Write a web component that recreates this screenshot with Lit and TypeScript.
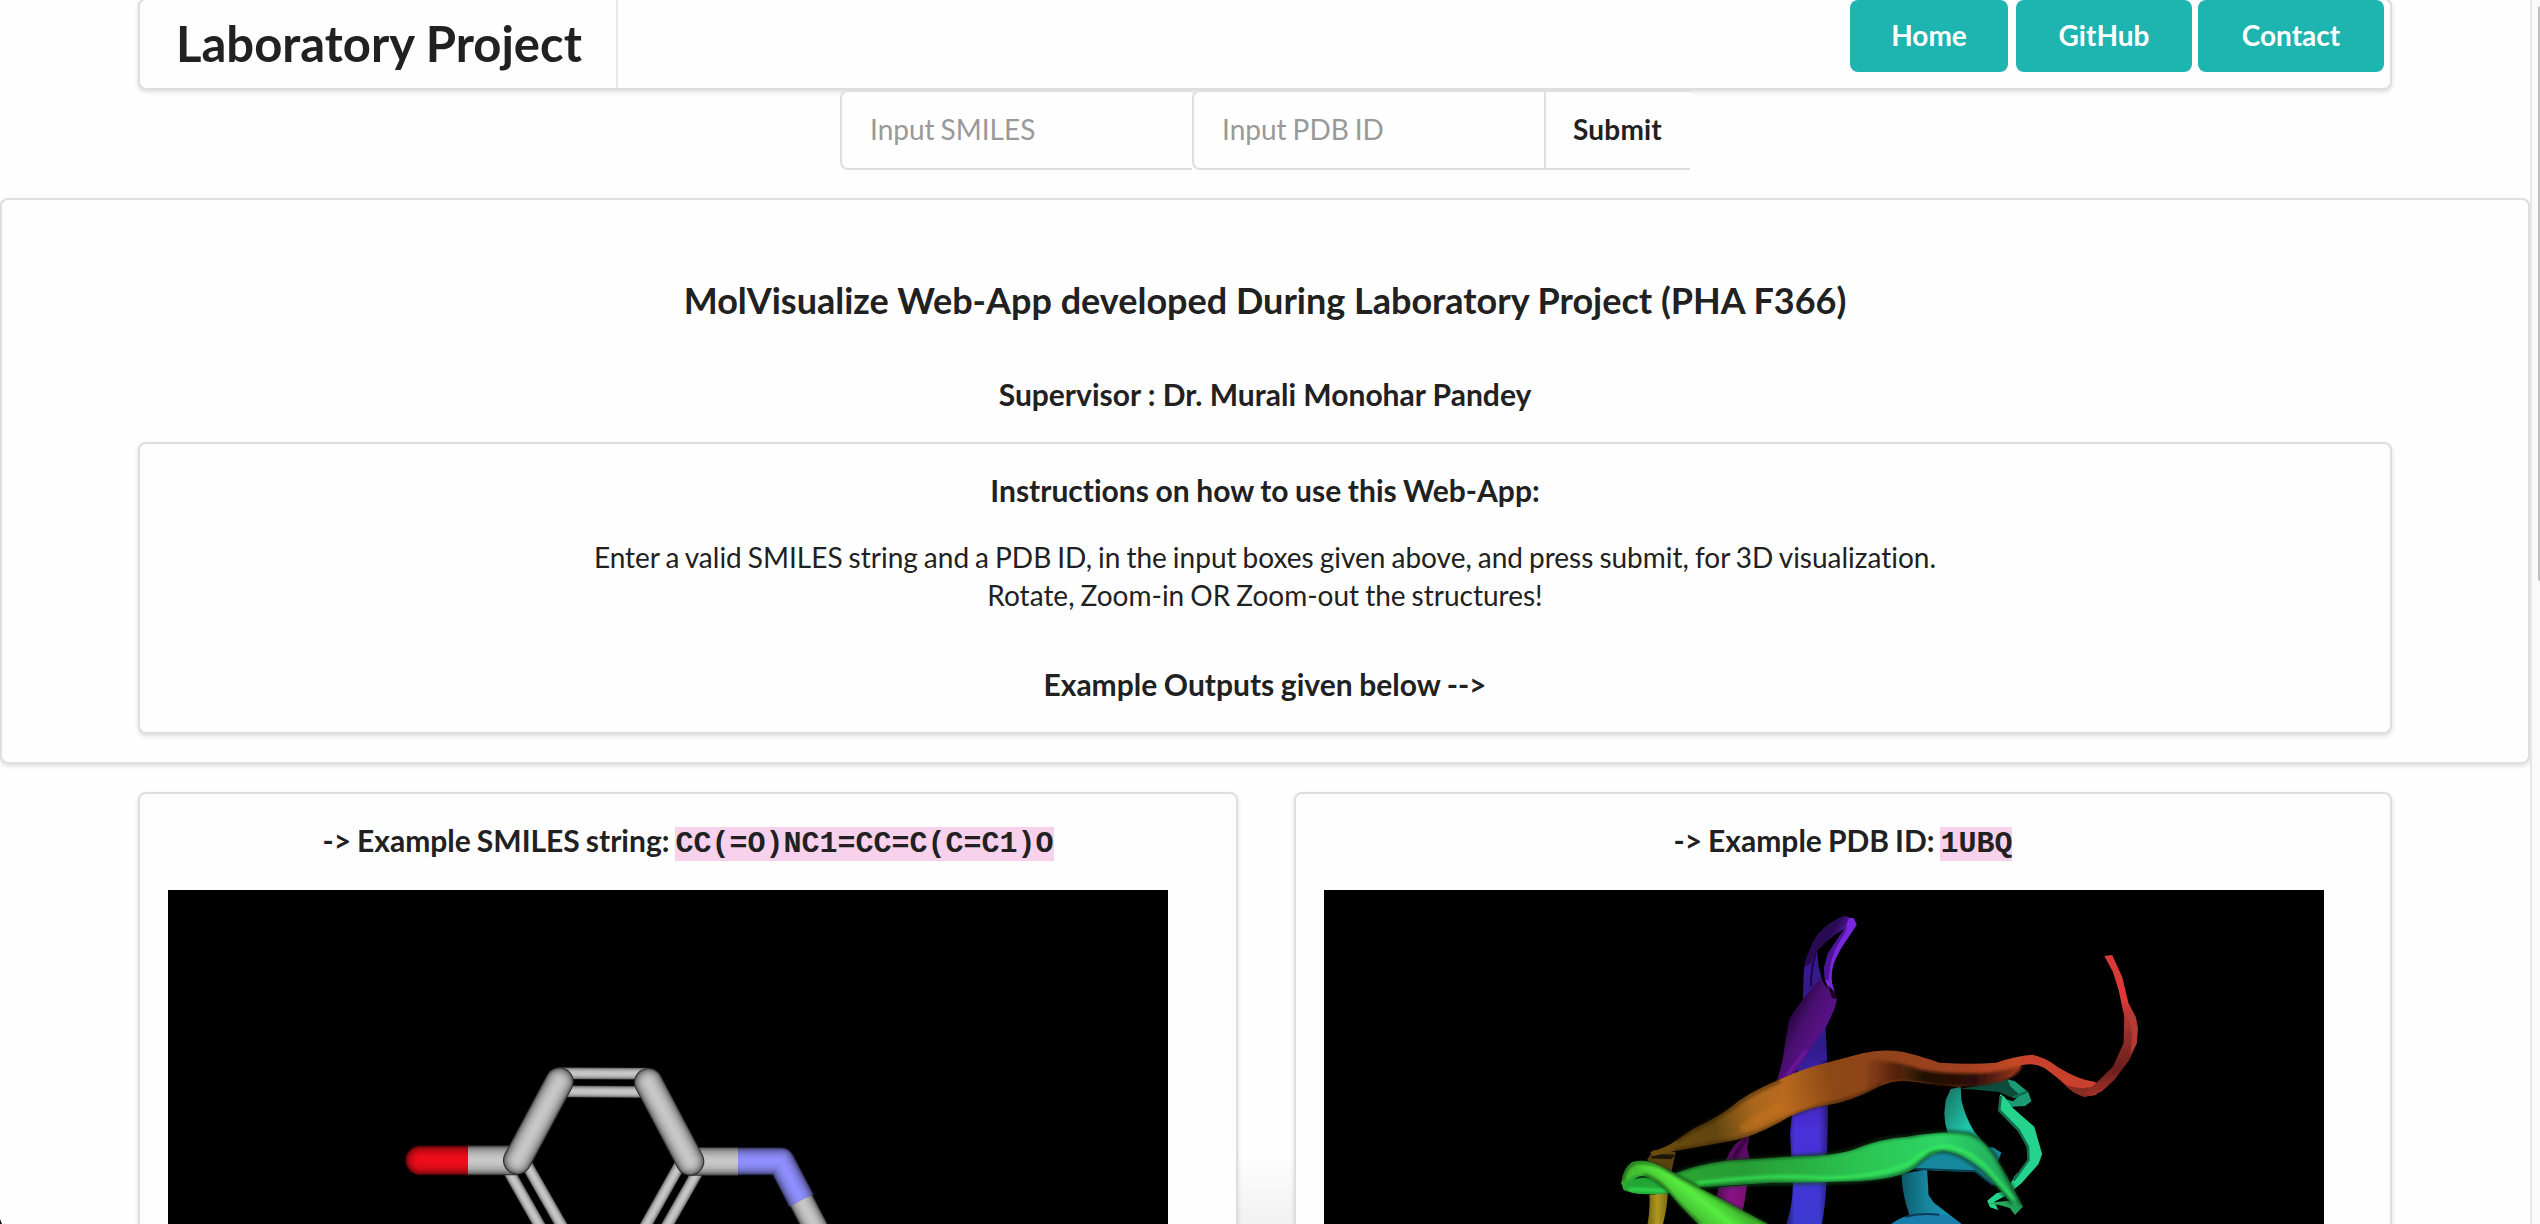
import { LitElement, html, svg, css } from "lit";
import { customElement } from "lit/decorators.js";

type RGB = [number, number, number];

/** A shaded cylinder: concentric strokes, dark at the rim and bright on the axis. */
const tube = (d: string, width: number, color: RGB, cap: "round" | "butt" = "round") => {
  const steps = 14;
  return Array.from({ length: steps }, (_, i) => {
    const t = 1 - i / steps;
    const k = 0.22 + 0.78 * Math.sqrt(1 - t * t);
    const fill = `rgb(${color.map((c) => Math.round(c * k)).join(",")})`;
    return svg`<path d=${d} fill="none" stroke=${fill} stroke-width=${width * t}
      stroke-linecap=${cap} stroke-linejoin="round"></path>`;
  });
};

const GREY: RGB = [200, 200, 200];
const RED: RGB = [240, 13, 26];
const BLUE: RGB = [143, 143, 255];

@customElement("molecule-view")
export class MoleculeView extends LitElement {
  static styles = css`
    :host { display: block; background: #000; }
    svg { display: block; }
  `;
  render() {
    return html`<svg width="1000" height="334" viewBox="168 890 1000 334">
      <g transform="translate(380 1040) scale(0.33333)">
        ${tube("M540 100L805 101", 36, GREY)}
        ${tube("M540 154L805 156", 36, GREY)}
        ${tube("M383 388L492 580", 36, GREY)}
        ${tube("M438 370L558 580", 36, GREY)}
        ${tube("M902 370L784 580", 36, GREY)}
        ${tube("M953 395L848 580", 36, GREY)}
        ${tube("M120 361L262 361", 90, RED)}
        ${tube("M264 361L412 361", 90, GREY, "butt")}
        ${tube("M930 364L1076 364", 86, GREY, "butt")}
        ${tube("M412 361L538 125", 86, GREY)}
        ${tube("M805 127L930 364", 86, GREY)}
        ${tube("M1075 364L1203 364L1265 483", 84, BLUE, "butt")}
        ${tube("M1264 482L1330 609", 76, GREY, "butt")}
      </g>
    </svg>`;
  }
}

@customElement("protein-view")
export class ProteinView extends LitElement {
  static styles = css`
    :host { display: block; background: #000; }
    svg { display: block; }
  `;
  render() {
    return html`<svg width="1000" height="334" viewBox="1324 890 1000 334">
      <defs>
        <linearGradient id="strand" x1="0" y1="0" x2="0" y2="1">
          <stop offset="0" stop-color="#3a1890"></stop><stop offset=".35" stop-color="#301a88"></stop>
          <stop offset=".65" stop-color="#4a30d8"></stop><stop offset="1" stop-color="#3a3ad0"></stop>
        </linearGradient>
        <linearGradient id="edge" x1="0" y1="0" x2="1" y2="0">
          <stop offset="0" stop-color="#000" stop-opacity=".6"></stop><stop offset=".25" stop-color="#000" stop-opacity="0"></stop>
          <stop offset=".8" stop-color="#000" stop-opacity="0"></stop><stop offset="1" stop-color="#000" stop-opacity=".4"></stop>
        </linearGradient>
        <linearGradient id="violet" gradientUnits="userSpaceOnUse" x1="520" y1="370" x2="625" y2="420">
          <stop offset="0" stop-color="#260540"></stop><stop offset=".4" stop-color="#4a1070"></stop><stop offset="1" stop-color="#5c118c"></stop>
        </linearGradient>
        <linearGradient id="loop" gradientUnits="userSpaceOnUse" x1="600" y1="70" x2="680" y2="110">
          <stop offset="0" stop-color="#2b0c5c"></stop><stop offset=".6" stop-color="#260a4c"></stop><stop offset="1" stop-color="#4c189c"></stop>
        </linearGradient>
        <linearGradient id="orange" gradientUnits="userSpaceOnUse" x1="140" y1="700" x2="1180" y2="500">
          <stop offset="0" stop-color="#6b4c0e"></stop><stop offset=".17" stop-color="#61460f"></stop>
          <stop offset=".28" stop-color="#a9671c"></stop><stop offset=".37" stop-color="#b96a1e"></stop>
          <stop offset=".5" stop-color="#8c4816"></stop><stop offset=".66" stop-color="#91431a"></stop>
          <stop offset=".85" stop-color="#a34120"></stop><stop offset="1" stop-color="#c64a27"></stop>
        </linearGradient>
        <linearGradient id="under" gradientUnits="userSpaceOnUse" x1="740" y1="500" x2="1185" y2="510">
          <stop offset="0" stop-color="#1e0d04" stop-opacity="0"></stop><stop offset=".38" stop-color="#190a04" stop-opacity=".95"></stop>
          <stop offset=".7" stop-color="#2c0f07"></stop><stop offset="1" stop-color="#a43a1f"></stop>
        </linearGradient>
        <linearGradient id="green" gradientUnits="userSpaceOnUse" x1="60" y1="0" x2="1180" y2="0">
          <stop offset="0" stop-color="#2fb033"></stop><stop offset=".3" stop-color="#279c35"></stop>
          <stop offset=".6" stop-color="#2bc452"></stop><stop offset=".8" stop-color="#2ed666"></stop>
          <stop offset="1" stop-color="#1f9d59"></stop>
        </linearGradient>
        <linearGradient id="lime" gradientUnits="userSpaceOnUse" x1="300" y1="860" x2="240" y2="930">
          <stop offset="0" stop-color="#40b62e"></stop><stop offset=".45" stop-color="#56ec40"></stop><stop offset="1" stop-color="#44be32"></stop>
        </linearGradient>
        <linearGradient id="red" gradientUnits="userSpaceOnUse" x1="1400" y1="170" x2="1400" y2="590">
          <stop offset="0" stop-color="#d93a38"></stop><stop offset=".3" stop-color="#dc3937"></stop>
          <stop offset=".55" stop-color="#94302b"></stop><stop offset=".8" stop-color="#6b1e1c"></stop><stop offset="1" stop-color="#a5312a"></stop>
        </linearGradient>
        <linearGradient id="cyan" x1="0" y1="0" x2="1" y2="0">
          <stop offset="0" stop-color="#0b5a6b"></stop><stop offset=".4" stop-color="#17839c"></stop><stop offset="1" stop-color="#1aa3c0"></stop>
        </linearGradient>
        <linearGradient id="teal" x1="0" y1="0" x2="1" y2="1">
          <stop offset="0" stop-color="#15705f"></stop><stop offset=".55" stop-color="#22c5ac"></stop><stop offset="1" stop-color="#158f8f"></stop>
        </linearGradient>
        <linearGradient id="gold" x1="0" y1="0" x2="1" y2="0">
          <stop offset="0" stop-color="#6f5d10"></stop><stop offset=".5" stop-color="#b0981f"></stop><stop offset="1" stop-color="#7c6a14"></stop>
        </linearGradient>
        <linearGradient id="magenta" x1="0" y1="0" x2="1" y2="0">
          <stop offset="0" stop-color="#4a0748"></stop><stop offset=".5" stop-color="#8a1288"></stop><stop offset="1" stop-color="#780f74"></stop>
        </linearGradient>
        <filter id="soft" x="-5%" y="-5%" width="110%" height="110%"><feGaussianBlur stdDeviation="5"></feGaussianBlur></filter>
      </defs>
      <g transform="translate(1600 900) scale(0.357143 0.333333)">
        <path fill="url(#strand)" d="M568 300L570 225Q572 180 588 150L606 135L612 200L622 240L632 390L636 480L638 640L634 850Q630 930 618 990L515 990Q540 930 540 850L532 700L540 620L556 480Z"></path>
        <path fill="url(#edge)" d="M540 480L636 480L638 640L634 850Q630 930 618 990L515 990Q540 930 540 850L532 700L540 620Z"></path>
        <path fill="none" stroke="#15083e" stroke-width="5" d="M590 260Q592 200 604 160"></path>
        <path fill="url(#loop)" d="M583 160Q592 130 612 100Q645 60 685 47L712 58L690 84Q650 105 620 140Q596 160 592 190L574 200Z"></path>
        <path fill="#7a26dc" d="M697 54L710 54L719 74L696 112Q670 150 655 190Q646 220 650 250L660 285L642 272L630 240L628 205Q632 175 646 150Q672 110 688 80Z"></path>
        <path fill="#4b1598" d="M638 160Q668 110 692 74L686 100Q655 145 645 195L640 240L630 240L627 205Z"></path>
        <path fill="url(#violet)" d="M568 298L618 235L634 262L650 270L664 296L656 328L636 375L590 442L558 500L520 560L494 545Q512 490 518 430L530 355Z"></path>
        <path fill="#16041f" d="M638 256L656 274L665 298L650 294Z"></path>
        <path fill="none" stroke="#741aa8" stroke-width="7" filter="url(#soft)" d="M578 450L520 530"></path>

        <path fill="#5c0a66" d="M352 782Q370 735 396 718L418 708L412 745L422 785Z"></path>
        <path fill="none" stroke="#2d0334" stroke-width="9" filter="url(#soft)" d="M412 715Q390 735 374 780"></path>
        <path fill="url(#magenta)" d="M332 862L412 855L407 890L398 945L320 945Q324 895 332 862Z"></path>
        <path fill="#5a4310" d="M132 780L150 750L212 756L200 815L160 800Z"></path>
        <path fill="#1c1404" d="M142 775L150 762L210 764L200 778Z"></path>
        <path fill="url(#gold)" d="M138 884L190 880Q188 930 172 990L130 990Q142 930 138 884Z"></path>

        <path fill="url(#cyan)" d="M844 822L916 808L920 885L935 908L1012 972L868 950Q846 885 844 822Z"></path>
        <path fill="#187eac" d="M815 972Q850 944 905 940Q955 940 985 950L1012 972Z"></path>
        <path fill="none" stroke="#0a3c5a" stroke-width="6" d="M855 951Q895 938 950 944"></path>
        <path fill="#17899f" d="M876 804L925 750L970 748L1100 742L1124 758L1112 790L1118 862L1080 842L1058 816L940 812Z"></path>
        <path fill="none" stroke="#083f50" stroke-width="6" d="M880 806L1050 814L1100 855"></path>
        <path fill="url(#teal)" d="M964 640L968 600L982 567L1010 560L1012 600Q1022 650 1048 695L1094 752L1076 765L1020 712L974 700Q964 670 964 640Z"></path>
        <path fill="#0b4c3c" d="M1010 566L1140 538L1160 545L1196 572L1206 600L1150 592L1118 576L1060 570Z"></path>
        <path fill="#1b9a75" d="M1140 538L1162 544L1200 578L1208 604L1190 618L1154 620L1132 596L1156 604L1176 586L1150 560Z"></path>
        <path fill="#25d48c" d="M1120 582L1132 590L1156 624L1216 680L1238 762L1228 792L1180 850L1140 885L1104 905L1115 930L1092 922L1084 902L1110 880L1138 872L1160 830L1198 785L1194 728L1168 690L1116 634Z"></path>
        <path fill="none" stroke="#126b4c" stroke-width="7" d="M1196 575L1156 592M1122 588L1118 630L1172 690L1198 740L1200 780L1158 842"></path>

        <path fill="url(#orange)" d="M140 756Q185 744 215 720L262 686Q320 658 360 627Q410 580 500 540Q570 505 640 487L735 460Q790 446 850 456Q910 472 950 488Q1040 494 1110 488Q1160 468 1212 464Q1245 472 1290 508Q1350 545 1392 548L1390 584L1356 590Q1325 580 1300 550L1245 504Q1215 486 1180 496L1150 530Q1080 552 1000 560Q930 552 850 542Q815 542 780 560Q700 605 640 614Q560 628 500 668Q430 708 380 720L270 742L205 754L150 768Z"></path>
        <path fill="url(#under)" d="M745 482Q820 478 900 510Q990 526 1090 518Q1140 510 1182 496Q1176 526 1120 546Q1040 566 950 558Q890 544 835 542Q790 550 745 575Z" filter="url(#soft)"></path>
        <path fill="none" stroke="#2e1d05" stroke-width="12" opacity=".5" filter="url(#soft)" d="M215 722L262 690Q320 660 362 629Q420 580 505 542"></path>
        <path fill="none" stroke="#d0791f" stroke-width="30" opacity=".35" filter="url(#soft)" d="M395 690L510 615"></path>
        <path fill="none" stroke="#241303" stroke-width="8" opacity=".5" filter="url(#soft)" d="M210 752L380 718Q440 702 500 665Q570 628 640 612Q720 595 790 552"></path>
        <path fill="#c9412d" d="M1182 470Q1230 458 1280 500Q1340 540 1384 545L1400 568L1360 588Q1325 580 1300 552L1250 502Q1215 484 1174 494Z"></path>
        <path fill="#872c20" d="M1300 552Q1340 572 1390 558L1378 586L1356 590Q1320 580 1300 552Z"></path>
        <path fill="url(#red)" d="M1412 168L1434 165L1462 230L1480 310L1500 350L1506 385L1503 430L1482 480L1440 540L1404 575L1375 588L1358 578L1390 548L1436 500L1466 430L1468 350L1452 270L1436 215Z"></path>
        <path fill="#b43a35" d="M1482 330L1500 352L1506 385L1503 430L1486 465L1490 400L1476 330Z"></path>

        <path fill="url(#green)" d="M60 850Q65 805 90 786Q130 776 160 794L210 820Q270 794 350 782L560 768Q640 768 700 752Q780 715 860 710Q950 692 1020 698Q1065 706 1100 758L1140 830L1184 920L1162 945L1148 925Q1120 912 1084 912L1110 906L1146 902L1080 820Q1030 764 960 752Q910 765 878 806Q840 835 720 844Q600 848 480 848L285 862Q180 890 95 880L66 870Z"></path>
        <path fill="#0d421a" d="M94 840Q110 822 145 826L170 838L120 840L74 856Z"></path>
        <path fill="#23a636" d="M78 846Q110 828 170 836L196 880L110 882L66 866Z"></path>
        <path fill="none" stroke="#38ef5b" stroke-width="9" opacity=".8" filter="url(#soft)" d="M80 868L190 872M270 850Q480 820 620 834Q780 834 870 788Q920 738 975 740Q1030 748 1080 800L1160 900"></path>
        <path fill="none" stroke="#0a3514" stroke-width="9" opacity=".75" filter="url(#soft)" d="M212 818Q280 790 360 780L560 768Q650 766 720 742Q790 710 870 708Q960 688 1030 700Q1070 710 1106 766L1180 914"></path>
        <path fill="none" stroke="#0d451c" stroke-width="8" opacity=".85" filter="url(#soft)" d="M285 863L480 850Q700 854 800 834Q860 820 880 800L925 762Q960 744 1010 770Q1070 808 1120 870L1152 912"></path>
        <path fill="url(#lime)" d="M96 786Q150 780 190 812Q265 856 340 898L475 975L278 975Q225 920 195 880Q155 825 96 824L60 852Q66 800 96 786Z"></path>
        <path fill="none" stroke="#0b3a0c" stroke-width="8" opacity=".75" filter="url(#soft)" d="M64 845Q68 800 100 788Q150 784 190 812L345 902L470 972M278 972Q225 920 195 880Q165 836 122 824"></path>
      </g>
    </svg>`;
  }
}

@customElement("app-root")
export class AppRoot extends LitElement {
  static styles = css`
    :host {
      display: flex; position: relative; width: 2540px; height: 1224px; overflow: hidden;
      background: #fefefe; color: #212121; font: 28px/40px Lato, "Liberation Sans", sans-serif;
      font-variant-ligatures: none;
    }
    * { box-sizing: border-box; }
    h1, h2, h3, p { margin: 0; font-weight: 700; }
    .page { flex: 1; min-width: 0; display: flex; flex-direction: column; }
    .box { background: #fefefe; border: 2px solid #dedede; border-radius: 8px; box-shadow: 0 2px 4px rgba(34, 36, 38, .15); }
    .menu { width: 2254px; height: 92px; flex: none; margin: -2px auto 0; display: flex; justify-content: space-between; }
    .brand { width: 478px; border-right: 2px solid #e8e8e8; padding: 12px 0 0 36px; font-size: 49px; line-height: 62px; white-space: nowrap; }
    .links { display: flex; padding-right: 6px; }
    .btn { height: 72px; padding: 15px 0 0; text-align: center; border-radius: 8px; background: #1eb4af; color: #fff; font-weight: 700; }
    .home { width: 158px; margin-right: 8px; }
    .github { width: 176px; margin-right: 6px; }
    .contact { width: 186px; }
    .form { display: flex; flex: none; width: 850px; height: 80px; margin: 0 auto; position: relative; }
    .field { width: 352px; background: #fefefe; border: 2px solid #dedede; border-right: 0; border-radius: 8px 0 0 8px; padding: 17px 28px; color: #999; word-spacing: -1.2px; }
    .submit { flex: 1; background: #fefefe; border: 2px solid #dedede; border-right: 0; padding: 17px 27px; font-weight: 700; letter-spacing: .2px; }
    .intro { margin-top: 28px; height: 566px; flex: none; text-align: center; padding-top: 77px; }
    .title { font-size: 36px; line-height: 46px; }
    .sub { font-size: 30px; line-height: 38px; }
    .supervisor { margin-top: 52px; }
    .howto { width: 2254px; height: 292px; margin: 29px auto 0; padding-top: 27px; }
    .howto .sub { word-spacing: -.7px; }
    .text { font-weight: 400; line-height: 38px; margin: 29px 0 51px; word-spacing: -1.15px; }
    .examples {
      flex: none; height: 460px; padding: 28px 138px 0; display: grid; grid-template-columns: 1100px 1098px; gap: 56px;
      background: radial-gradient(ellipse 900px 70px at 50% 100%, rgba(0, 0, 0, .05), transparent);
    }
    .card { padding: 27px 28px 0; height: 600px; }
    .card .sub { text-align: center; height: 69px; line-height: 38px; white-space: nowrap; word-spacing: -1.3px; }
    .code { font-family: "Liberation Mono", monospace; background: #f8d2ec; line-height: 34px; }
    .view { width: 1000px; }
    .bar { width: 10px; flex: none; border-left: 2px solid #e6e6e6; background: #fafafa; padding: 6px 0 0 6px; }
    .thumb { height: 575px; background: #bfbfbf; border-radius: 2px 0 0 2px; }
    .corner { position: absolute; left: 0; bottom: 0; width: 2px; height: 5px; background: #111; clip-path: polygon(0 0, 100% 100%, 0 100%); }
  `;
  render() {
    return html`
      <div class="page">
        <nav class="menu box">
          <h1 class="brand">Laboratory Project</h1>
          <div class="links">
            <div class="btn home">Home</div><div class="btn github">GitHub</div><div class="btn contact">Contact</div>
          </div>
        </nav>
        <div class="form">
          <div class="field">Input SMILES</div>
          <div class="field">Input PDB ID</div>
          <div class="submit">Submit</div>
        </div>
        <section class="intro box">
          <h2 class="title">MolVisualize Web-App developed During Laboratory Project (PHA F366)</h2>
          <h3 class="sub supervisor">Supervisor : Dr. Murali Monohar Pandey</h3>
          <div class="howto box">
            <h3 class="sub">Instructions on how to use this Web-App:</h3>
            <p class="text">Enter a valid SMILES string and a PDB ID, in the input boxes given above, and press submit, for 3D visualization.<br />Rotate, Zoom-in OR Zoom-out the structures!</p>
            <h3 class="sub">Example Outputs given below --&gt;</h3>
          </div>
        </section>
        <section class="examples">
          <div class="card box">
            <h3 class="sub">-&gt; Example SMILES string: <span class="code">CC(=O)NC1=CC=C(C=C1)O</span></h3>
            <molecule-view class="view"></molecule-view>
          </div>
          <div class="card box">
            <h3 class="sub">-&gt; Example PDB ID: <span class="code">1UBQ</span></h3>
            <protein-view class="view"></protein-view>
          </div>
        </section>
      </div>
      <div class="bar"><div class="thumb"></div></div>
      <span class="corner"></span>
    `;
  }
}
